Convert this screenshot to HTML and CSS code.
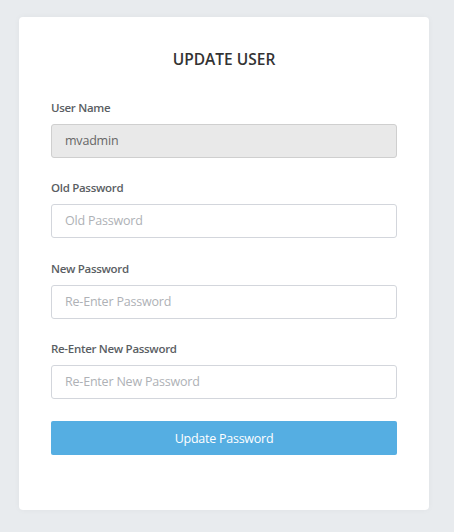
FILE: index.html
```html
<!DOCTYPE html>
<html>
<head>
<meta charset="utf-8">
<link rel="stylesheet" href="styles.css">
</head>
<body>
<div class="page">
  <div class="card">
    <h2 class="title">UPDATE USER</h2>
    <div class="group group-tight">
      <label class="label">User Name</label>
      <div class="input disabled">mvadmin</div>
    </div>
    <div class="group">
      <label class="label">Old Password</label>
      <div class="input placeholder">Old Password</div>
    </div>
    <div class="group group-tight">
      <label class="label">New Password</label>
      <div class="input placeholder">Re-Enter Password</div>
    </div>
    <div class="group group-tight">
      <label class="label">Re-Enter New Password</label>
      <div class="input placeholder">Re-Enter New Password</div>
    </div>
    <div class="actions">
      <button class="btn">Update Password</button>
    </div>
  </div>
</div>
</body>
</html>
```
FILE: styles.css
```css
html, body {
  margin: 0;
  padding: 0;
}
body {
  background: #e8ebee;
  font-family: "Open Sans", "Noto Sans", sans-serif;
  width: 454px;
  height: 532px;
  overflow: hidden;
}
.page {
  padding: 17px 25px 0 19px;
}
.card {
  width: 346px;
  background: #fff;
  border-radius: 4px;
  padding: 32px 32px 32px 32px;
  box-shadow: 0 0 6px rgba(0, 0, 0, 0.04);
}
.title {
  margin: 0 0 29px 0;
  text-align: center;
  font-size: 15.5px;
  line-height: 20px;
  font-weight: 600;
  color: #333;
}
.group {
  margin-bottom: 21px;
}
.group-tight {
  margin-bottom: 20px;
}
.label {
  display: block;
  font-size: 11.5px;
  line-height: 19px;
  font-weight: 600;
  color: #5a5e63;
  letter-spacing: -0.3px;
  margin-bottom: 7px;
}
.input {
  box-sizing: border-box;
  height: 34px;
  border: 1px solid #d3d6dc;
  border-radius: 3px;
  padding: 0 13px;
  font-size: 12.5px;
  letter-spacing: -0.2px;
  line-height: 32px;
  color: #555;
  background: #fff;
}
.input.disabled {
  background: #e9e9e9;
  border-color: #cfcfcf;
  color: #666;
}
.input.placeholder {
  color: #aeb1b6;
}
.actions {
  padding-top: 2px;
  margin-bottom: 23px;
}
.btn {
  display: block;
  width: 100%;
  height: 34px;
  border: none;
  border-radius: 2px;
  background: #55aee2;
  color: #fff;
  font-family: "Open Sans", "Noto Sans", sans-serif;
  font-size: 12.5px;
  letter-spacing: -0.25px;
  cursor: pointer;
}
```
